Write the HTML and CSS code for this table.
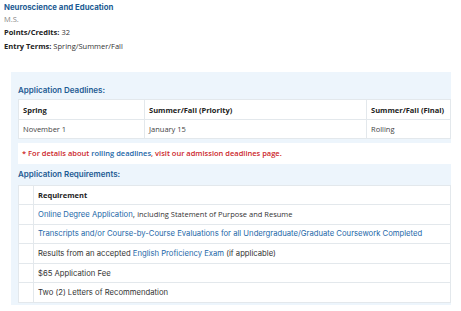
FILE: index.html
```html
<!DOCTYPE html>
<html lang="en">

<head>
    <meta charset="UTF-8">
    <meta name="viewport" content="width=device-width, initial-scale=1.0">
    <title>Neuroscience and Education</title>
    <link rel="stylesheet" href="styles.css">
</head>

<body>
    <div class="program">
        <h3>Neuroscience and Education</h3>
        <div class="degree">M.S.</div>
        <p><b>Points/Credits:</b> 32</p>
        <p><b>Entry Terms:</b> Spring/Summer/Fall</p>
    </div>

    <div class="details">
        <h4>Application Deadlines:</h4>
        <table class="deadlines">
            <tr>
                <th class="c1">Spring</th>
                <th class="c2">Summer/Fall (Priority)</th>
                <th class="c3">Summer/Fall (Final)</th>
            </tr>
            <tr>
                <td>November 1</td>
                <td>January 15</td>
                <td>Rolling</td>
            </tr>
        </table>

        <div class="note">
            * For details about <a href="#">rolling deadlines</a>, visit our admission deadlines page.
        </div>

        <h4 class="req-title">Application Requirements:</h4>
        <table class="reqs">
            <tr>
                <th class="blank"></th>
                <th>Requirement</th>
            </tr>
            <tr>
                <td class="blank"></td>
                <td><a href="#">Online Degree Application</a>, <span class="os">including Statement of Purpose and Resume</span></td>
            </tr>
            <tr>
                <td class="blank"></td>
                <td><a href="#">Transcripts and/or Course-by-Course Evaluations for all Undergraduate/Graduate Coursework Completed</a></td>
            </tr>
            <tr>
                <td class="blank"></td>
                <td>Results from an accepted <a href="#">English Proficiency Exam</a> (if applicable)</td>
            </tr>
            <tr>
                <td class="blank"></td>
                <td>$65 Application Fee</td>
            </tr>
            <tr>
                <td class="blank"></td>
                <td>Two (2) Letters of Recommendation</td>
            </tr>
        </table>
    </div>
</body>

</html>
```

FILE: styles.css
```css
html,
body {
    margin: 0;
    padding: 0;
    background: #fff;
    color: #333;
    font-family: "Open Sans", sans-serif;
    font-size: 7.5px;
}

body {
    padding: 1px 4px 0 4px;
}

.program h3 {
    margin: 0;
    font-family: Inter, sans-serif;
    font-weight: 700;
    font-size: 7.8px;
    line-height: 12px;
    color: #1d5b93;
}

.program .degree {
    color: #888;
    line-height: 12px;
}

.program p {
    margin: 0;
    line-height: 14px;
    color: #333;
}

.program p b {
    font-weight: 700;
    color: #222;
}

.details {
    background: #edf5fc;
    margin: 19px 0 0 7px;
    width: 440px;
    padding: 9px 0 2px 7px;
    box-sizing: border-box;
}

.details h4 {
    margin: 0;
    font-family: Inter, sans-serif;
    font-weight: 600;
    font-size: 8px;
    line-height: 18px;
    color: #1d5b93;
}

.details .req-title {
    line-height: 21px;
}

table {
    width: 100%;
    border-collapse: collapse;
    background: #fff;
    table-layout: fixed;
}

th,
td {
    text-align: left;
    border: 1px solid #e3e8ec;
    padding: 0 4px;
    height: 18px;
    font-size: 7.5px;
    white-space: nowrap;
}

th {
    font-weight: 700;
    color: #222;
}

td {
    color: #444;
}

.deadlines th {
    height: 19px;
}

.deadlines .c1 {
    width: 117px;
}

.deadlines .c2 {
    width: 213px;
}

.note {
    background: #fff;
    margin-top: 4px;
    padding: 6px 4px;
    color: #cc1f2a;
    font-weight: 600;
    font-size: 7.5px;
    line-height: 9px;
}

.note a {
    color: #1d67a8;
    text-decoration: none;
}

.reqs th {
    height: 18px;
}

.reqs td {
    height: 18.6px;
    font-family: Inter, sans-serif;
    font-size: 7.7px;
    color: #333;
}

.reqs .blank {
    width: 14px;
    padding: 0;
}

.reqs a {
    color: #1d67a8;
    text-decoration: none;
}

.reqs .os {
    font-family: "Open Sans", sans-serif;
    font-size: 7.5px;
}
```
